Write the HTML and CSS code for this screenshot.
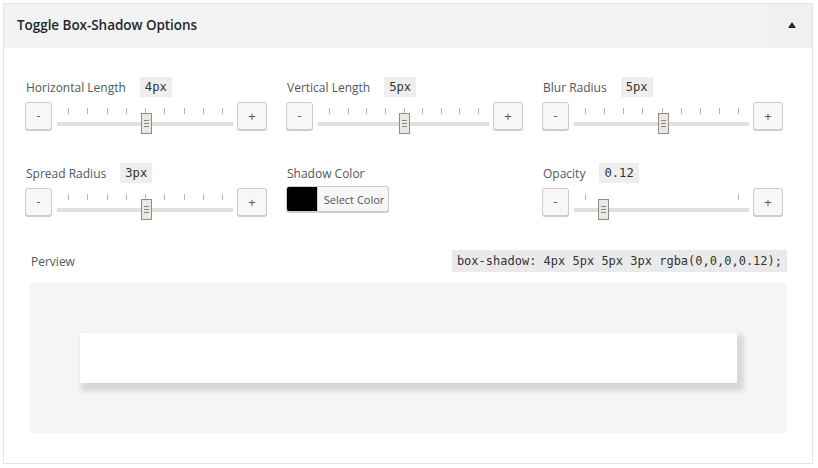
FILE: index.html
```html
<!DOCTYPE html>
<html>
<head>
<meta charset="utf-8">
<link rel="stylesheet" href="styles.css">
</head>
<body>
<div class="panel">
  <div class="panel-header">
    <h3 class="panel-title">Toggle Box-Shadow Options</h3>
    <button class="panel-toggle" aria-label="Toggle"><span class="tri"></span></button>
  </div>
  <div class="panel-body">
    <div class="controls">
      <div class="control">
        <div class="control-head"><span class="label">Horizontal Length</span><span class="badge">4px</span></div>
        <div class="control-row">
          <button class="btn btn-minus">-</button>
          <div class="slider">
            <div class="ticks"><i></i><i></i><i></i><i></i><i></i><i></i><i></i><i></i><i></i></div>
            <div class="track"></div>
            <span class="handle" style="left:84px"><b></b><b></b><b></b></span>
          </div>
          <button class="btn btn-plus">+</button>
        </div>
      </div>
      <div class="control">
        <div class="control-head"><span class="label">Vertical Length</span><span class="badge">5px</span></div>
        <div class="control-row">
          <button class="btn btn-minus">-</button>
          <div class="slider">
            <div class="ticks"><i></i><i></i><i></i><i></i><i></i><i></i><i></i><i></i><i></i></div>
            <div class="track"></div>
            <span class="handle" style="left:81px"><b></b><b></b><b></b></span>
          </div>
          <button class="btn btn-plus">+</button>
        </div>
      </div>
      <div class="control">
        <div class="control-head"><span class="label">Blur Radius</span><span class="badge">5px</span></div>
        <div class="control-row">
          <button class="btn btn-minus">-</button>
          <div class="slider">
            <div class="ticks"><i></i><i></i><i></i><i></i><i></i><i></i><i></i><i></i><i></i></div>
            <div class="track"></div>
            <span class="handle" style="left:84px"><b></b><b></b><b></b></span>
          </div>
          <button class="btn btn-plus">+</button>
        </div>
      </div>
      <div class="control">
        <div class="control-head"><span class="label">Spread Radius</span><span class="badge">3px</span></div>
        <div class="control-row">
          <button class="btn btn-minus">-</button>
          <div class="slider">
            <div class="ticks"><i></i><i></i><i></i><i></i><i></i><i></i><i></i><i></i><i></i></div>
            <div class="track"></div>
            <span class="handle" style="left:84px"><b></b><b></b><b></b></span>
          </div>
          <button class="btn btn-plus">+</button>
        </div>
      </div>
      <div class="control">
        <div class="control-head"><span class="label">Shadow Color</span></div>
        <div class="control-row color-row">
          <button class="color-result"><span class="swatch"></span><span class="color-text">Select Color</span></button>
        </div>
      </div>
      <div class="control">
        <div class="control-head"><span class="label">Opacity</span><span class="badge">0.12</span></div>
        <div class="control-row">
          <button class="btn btn-minus">-</button>
          <div class="slider">
            <div class="ticks"><i></i><i></i></div>
            <div class="track"></div>
            <span class="handle" style="left:24px"><b></b><b></b><b></b></span>
          </div>
          <button class="btn btn-plus">+</button>
        </div>
      </div>
    </div>

    <div class="preview">
      <div class="preview-head">
        <span class="label">Perview</span>
        <code class="code">box-shadow: 4px 5px 5px 3px rgba(0,0,0,0.12);</code>
      </div>
      <div class="preview-area">
        <div class="preview-box"></div>
      </div>
    </div>
  </div>
</div>
</body>
</html>
```

FILE: styles.css
```css
* { box-sizing: border-box; }
html, body { margin: 0; padding: 0; background: #fff; }
body {
  font-family: "Open Sans", "Noto Sans", sans-serif;
  color: #444;
}
.panel {
  margin: 3px 0 0 3px;
  width: 810px;
  border: 1px solid #e5e5e5;
  background: #fff;
}
.panel-header {
  display: flex;
  align-items: stretch;
  height: 44px;
  background: #f3f3f3;
}
.panel-title {
  flex: 1;
  margin: 0;
  padding: 0 0 2px 13px;
  display: flex;
  align-items: center;
  font-size: 13.5px;
  font-weight: 600;
  color: #23282d;
  letter-spacing: -0.05px;
}
.panel-toggle {
  width: 44px;
  border: 0;
  margin: 0;
  padding: 0;
  background: #f1f1f1;
  display: flex;
  align-items: center;
  justify-content: center;
}
.tri {
  width: 0;
  height: 0;
  border-left: 4px solid transparent;
  border-right: 4px solid transparent;
  border-bottom: 6px solid #23282d;
  margin: 0 0 3px 3px;
}
.panel-body {
  padding: 29px 21px 30px 21px;
}
.controls {
  display: grid;
  grid-template-columns: 242px 237px 241px;
  column-gap: 19px;
  row-gap: 32px;
}
.control-head {
  display: flex;
  align-items: center;
  height: 20px;
}
.label {
  font-size: 12px;
  color: #50575e;
  margin-right: 14px;
  padding-left: 1px;
}
.badge {
  display: inline-block;
  height: 20px;
  line-height: 20px;
  padding: 0 5px;
  background: #eee;
  color: #333;
  font-family: "DejaVu Sans Mono", "Liberation Mono", monospace;
  font-size: 12.2px;
}
.control-row {
  display: flex;
  align-items: flex-start;
  margin-top: 5px;
  height: 29px;
}
.btn {
  height: 28px;
  padding: 0;
  margin: 0;
  border: 1px solid #ccc;
  border-radius: 3px;
  background: #f7f7f7;
  box-shadow: 0 1px 0 #ccc;
  color: #555;
  font-family: "Open Sans", sans-serif;
  font-size: 12px;
  line-height: 26px;
  flex: none;
}
.btn-minus { width: 27px; }
.btn-plus { width: 30px; font-size: 13px; }
.slider {
  position: relative;
  flex: 1;
  height: 28px;
  margin: 0 4px 0 5px;
}
.ticks {
  display: flex;
  justify-content: space-between;
  padding: 0 10px 0 11px;
  margin-top: 6px;
  height: 6px;
}
.ticks i {
  display: block;
  width: 1px;
  height: 6px;
  background: #b5b5b5;
}
.track {
  margin-top: 8px;
  height: 4px;
  background: #e3e0db;
}
.handle {
  position: absolute;
  top: 11px;
  width: 11px;
  height: 21px;
  background: #ebe8e4;
  border: 1px solid #938c85;
  display: flex;
  flex-direction: column;
  justify-content: center;
  align-items: center;
  gap: 2px;
}
.handle b {
  display: block;
  width: 5px;
  height: 1px;
  background: #8c8680;
}
.color-row { margin-top: 3px; }
.color-result {
  display: flex;
  align-items: stretch;
  height: 26px;
  padding: 0;
  margin: 0;
  border: 1px solid #ccc;
  border-radius: 3px;
  background: #f7f7f7;
  box-shadow: 0 1px 0 #ccc;
  overflow: hidden;
  width: 103px;
}
.swatch {
  width: 31px;
  background: #000;
  border-right: 1px solid #ccc;
}
.color-text {
  flex: 1;
  display: flex;
  align-items: center;
  justify-content: center;
  padding-left: 2px;
  font-family: "Open Sans", sans-serif;
  font-size: 11px;
  color: #555;
}
.preview {
  margin: 33px 4px 0 5px;
}
.preview-head {
  display: flex;
  justify-content: space-between;
  align-items: center;
  height: 22px;
}
.code {
  display: block;
  height: 22px;
  line-height: 22px;
  padding: 0 5px;
  background: #eaeaea;
  color: #333;
  font-family: "DejaVu Sans Mono", "Liberation Mono", monospace;
  font-size: 12px;
}
.preview-area {
  margin-top: 11px;
  padding: 50px;
  background: #f5f5f5;
}
.preview-box {
  height: 50px;
  background: #fff;
  box-shadow: 4px 5px 5px 3px rgba(0,0,0,0.12);
}
```
